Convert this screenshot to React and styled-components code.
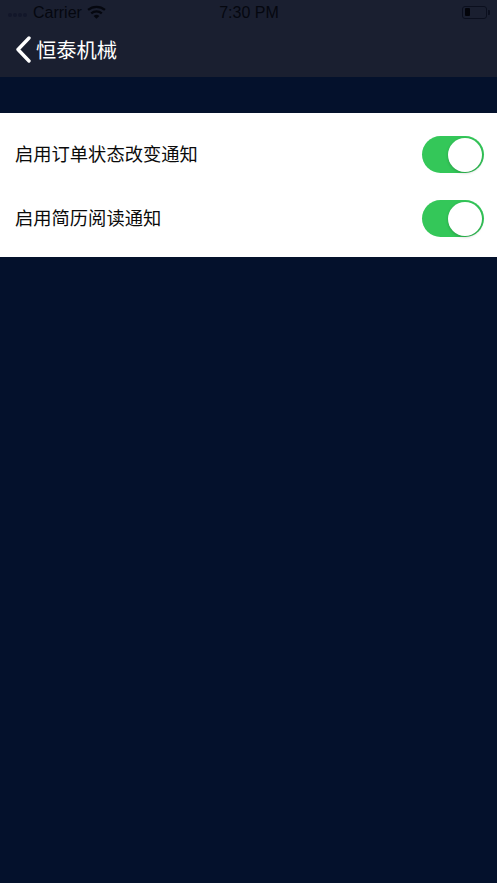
import React from "react";
import styled, { createGlobalStyle } from "styled-components";

const Global = createGlobalStyle`
  html, body { margin: 0; padding: 0; background: #04112c; }
  body { font-family: "Liberation Sans", "Noto Sans CJK SC", sans-serif; }
`;
const Page = styled.div`
  width: 497px; height: 883px; background: #04112c; overflow: hidden;
`;
const Header = styled.header`
  height: 77px; background: #1a1f30; display: flex; flex-direction: column;
`;
const StatusBar = styled.div`
  height: 24px; display: grid; grid-template-columns: 1fr auto 1fr; align-items: center;
  padding: 0 7px 0 8px; color: #05070f; font-size: 16px;
`;
const StatusLeft = styled.div`display: flex; align-items: center;`;
const Dots = styled.div`display: flex; gap: 1px; margin-right: 6px; margin-top: 5px;`;
const Dot = styled.span`width: 4px; height: 4px; border-radius: 50%; background: #12172a;`;
const Carrier = styled.span`margin-right: 5px; padding-top: 1px;`;
const Time = styled.span`font-size: 16px; padding-top: 1px;`;
const Battery = styled.div`justify-self: end; display: flex; align-items: center; gap: 1px;`;
const BatteryBody = styled.div`
  width: 25px; height: 13px; box-sizing: border-box; border: 1.5px solid #0b0f1e; border-radius: 3px; padding: 1.5px;
`;
const BatteryLevel = styled.div`width: 5px; height: 100%; background: #03040a; border-radius: 1px;`;
const BatteryCap = styled.div`width: 2px; height: 5px; background: #0b0f1e; border-radius: 0 1px 1px 0;`;
const NavBar = styled.div`
  flex: 1; display: flex; align-items: center; padding: 0 0 3px 15px; gap: 5px; color: #fff;
`;
const Title = styled.span`
  font-family: "Noto Sans CJK SC", sans-serif; font-size: 20.3px; line-height: 28px;
`;
const Card = styled.section`
  margin-top: 36px; background: #fff; padding: 9px 0 7px;
`;
const Row = styled.div`
  height: 64px; display: flex; align-items: center; justify-content: space-between; padding: 0 13.5px 0 15px;
`;
const Label = styled.span`
  font-family: "Noto Sans CJK SC", sans-serif; font-size: 18.3px; color: #0b0b0b; margin-bottom: 2px;
`;
const Switch = styled.div`
  position: relative; width: 61.5px; height: 37px; border-radius: 18.5px; background: #34c759;
`;
const Knob = styled.div`
  position: absolute; top: 2px; right: 1.5px; width: 34px; height: 34px; border-radius: 50%;
  background: #fff; box-shadow: 0 1px 3px rgba(0,0,0,.22);
`;

const Toggle = () => <Switch><Knob /></Switch>;

export default function App() {
  return (
    <Page>
      <Global />
      <Header>
        <StatusBar>
          <StatusLeft>
            <Dots>{[0,1,2,3].map(i => <Dot key={i} />)}</Dots>
            <Carrier>Carrier</Carrier>
            <svg width="19" height="14" viewBox="0 0 18 13" fill="none">
              <path d="M1 4.6C5.6 .6 12.4 .6 17 4.6" stroke="#05070f" strokeWidth="2.2" />
              <path d="M4 7.7C6.9 5.2 11.1 5.2 14 7.7" stroke="#05070f" strokeWidth="2.2" />
              <path d="M6.3 10.2L9 13L11.7 10.2C10 8.8 8 8.8 6.3 10.2Z" fill="#05070f" />
            </svg>
          </StatusLeft>
          <Time>7:30 PM</Time>
          <Battery>
            <BatteryBody><BatteryLevel /></BatteryBody>
            <BatteryCap />
          </Battery>
        </StatusBar>
        <NavBar>
          <svg width="16" height="27" viewBox="0 0 16 27" fill="none">
            <path d="M14 2L3 13.5L14 25" stroke="#fff" strokeWidth="3.4" strokeLinecap="round" strokeLinejoin="round" />
          </svg>
          <Title>恒泰机械</Title>
        </NavBar>
      </Header>
      <Card>
        <Row><Label>启用订单状态改变通知</Label><Toggle /></Row>
        <Row><Label>启用简历阅读通知</Label><Toggle /></Row>
      </Card>
    </Page>
  );
}
